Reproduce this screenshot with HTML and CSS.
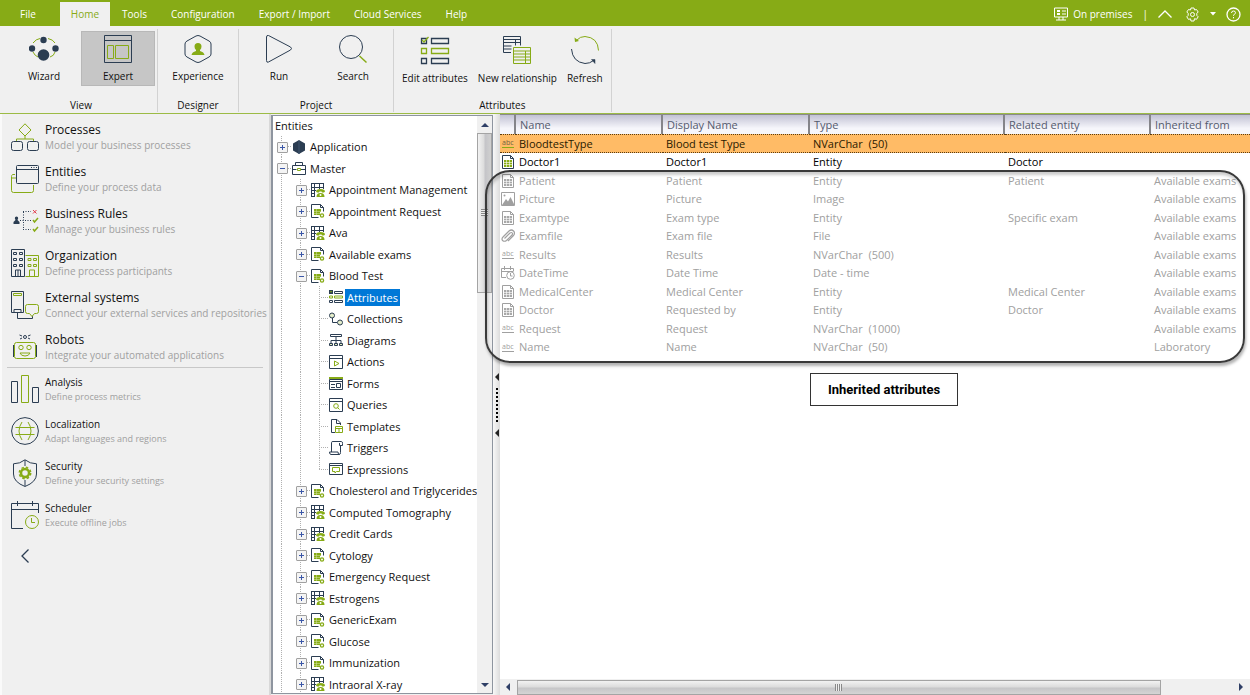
FILE: index.html
```html
<!DOCTYPE html>
<html lang="en">
<head>
	<meta charset="UTF-8">
	<meta name="viewport" content="width=device-width">
	<title>Studio - Blood Test attributes</title>
	<link rel="stylesheet" href="styles.css">
</head>
<body>

<!-- shared icons, used more than once below -->
<svg class="sprite" aria-hidden="true">
	<symbol id="i-table" viewBox="0 0 14 14">
		<path d="M0 .5h13M0 4.500h13M.5 0v13.500M3.500 0v13.500M8.500 0v6M12.500 0v6M0 7.500h5M0 10.500h4M0 13.500h4" fill="none" stroke="#2b3d52"/>
		<path d="M5 8.500Q5 6 9.500 6T14 8.500L13 9.500h-2L10.500 8.500h-2L8 9.500H6zM5.500 14q0-4 4-4t4 4z" fill="#87ab16"/>
		<circle cx="9.500" cy="12" r="1" fill="#fff"/>
	</symbol>
	<symbol id="i-doc" viewBox="0 0 14 14">
		<path d="M9.500.5h-9v13h7M9.500.5l3 3v4M9.500.5v3h3" fill="none" stroke="#2b3d52"/>
		<path d="M3 5h7v3H9v3H3z" fill="#87ab16"/>
		<path d="M3 7.500h7M3 9.500h6M5.500 5v6" stroke="#d5e3a8" stroke-width=".5"/>
		<circle cx="11" cy="11.500" r="1.600" fill="#fff" stroke="#87ab16" stroke-width="1.300"/>
	</symbol>
	<symbol id="i-entity" viewBox="0 0 14 14">
		<path d="M1.500.5h8l3 3v10h-11zM9.500.5v3h3" fill="none" stroke="currentColor"/>
		<path class="grid-fill" d="M3 5h8v7H3z"/>
		<path d="M3 7.500h8M3 9.500h8M5.500 5v7M8.500 5v7" stroke="#fff" stroke-width=".6"/>
	</symbol>
</svg>

<header class="topbar">
	<nav class="tabs">
		<a href="#" class="tab file">File</a>
		<a href="#" class="tab active">Home</a>
		<a href="#" class="tab">Tools</a>
		<a href="#" class="tab">Configuration</a>
		<a href="#" class="tab">Export / Import</a>
		<a href="#" class="tab">Cloud Services</a>
		<a href="#" class="tab">Help</a>
	</nav>
	<div class="tools">
		<svg width="14" height="14" viewBox="0 0 14 14"><path d="M.5 1h13v9H.5zM5 10v3M9 10v3M2 13h10M8 4h4M8 7h4" fill="none" stroke="#fff"/><path d="M3 3h3v2H3zM3 6h3v2H3z" fill="#fff"/></svg>
		<span>On premises</span>
		<span class="bar">|</span>
		<button class="tool" aria-label="Collapse ribbon"><svg width="14" height="8" viewBox="0 0 14 8"><path d="M.5 7.500 7 1l6.500 6.500" fill="none" stroke="#fff" stroke-width="1.300"/></svg></button>
		<button class="tool gear" aria-label="Settings">
			<svg width="15" height="15" viewBox="0 0 15 15"><path d="M6 1h3l.5 2 2-.5 1.700 2.500-1.400 1.400v2l1.400 1.400-1.700 2.500-2-.6L9 14H6l-.5-2.200-2 .6L1.800 9.800l1.400-1.400v-2L1.800 5l1.700-2.500 2 .5z" fill="none" stroke="#fff"/><circle cx="7.500" cy="7.500" r="2" fill="none" stroke="#fff"/></svg>
			<svg width="6" height="4" viewBox="0 0 6 4"><path d="M0 0h6L3 3.500z" fill="#fff"/></svg>
		</button>
		<button class="tool" aria-label="Help"><svg width="15" height="15" viewBox="0 0 15 15"><circle cx="7.500" cy="7.500" r="6.500" fill="none" stroke="#fff" stroke-width="1.300"/><path d="M5.500 6q0-2 2-2t2 1.800q0 1-1.200 1.500-.8.500-.8 1.500M7.500 10v1.300" fill="none" stroke="#fff"/></svg></button>
	</div>
</header>

<section class="ribbon">
	<div class="group">
		<div class="buttons">
			<button class="rb">
				<svg width="30" height="30" viewBox="0 0 30 30"><path d="M4 9q3-4 7-4.500M19 4.500q5 1 7 4.500M4 18q2 4 5 5M21 23q4-1 5-5" fill="none" stroke="#87ab16"/><g fill="#2b3d52"><circle cx="14.500" cy="6" r="3.200"/><circle cx="3" cy="14.500" r="3.200"/><circle cx="26.500" cy="14.500" r="3.200"/><circle cx="14.500" cy="21" r="5.800"/></g></svg>
				Wizard
			</button>
			<button class="rb on">
				<svg width="30" height="30" viewBox="0 0 30 30"><path d="M1.500 1.500h27v27h-27zM1.500 6.500h27" fill="none" stroke="#2b3d52"/><path d="M4.500 11.500h6v13h-6zM12.500 11.500h13v13h-13z" fill="none" stroke="#87ab16"/></svg>
				Expert
			</button>
		</div>
		<div class="caption">View</div>
	</div>
	<div class="group">
		<div class="buttons">
			<button class="rb">
				<svg width="30" height="30" viewBox="0 0 30 30"><path d="M13 2q2-1 4 0l9 5q2 1 2 3v10q0 2-2 3l-9 5q-2 1-4 0l-9-5q-2-1-2-3V10q0-2 2-3z" fill="none" stroke="#2b3d52"/><path d="M15 9q3.500 0 3.500 3.500 0 2-1.500 3.500v1q4 1 4.500 4h-13q.5-3 4.500-4v-1q-1.500-1.500-1.500-3.500Q11.500 9 15 9z" fill="#87ab16"/></svg>
				Experience
			</button>
		</div>
		<div class="caption">Designer</div>
	</div>
	<div class="group">
		<div class="buttons">
			<button class="rb">
				<svg width="30" height="30" viewBox="0 0 30 30"><path d="M2.500 3q0-2 2-1.500l22 11.500q2 1.500 0 3L4.500 28q-2 1-2-1.500z" fill="none" stroke="#2b3d52"/></svg>
				Run
			</button>
			<button class="rb">
				<svg width="30" height="30" viewBox="0 0 30 30"><circle cx="13" cy="13" r="11.500" fill="none" stroke="#2b3d52"/><path d="m21.500 22 7 6.500" stroke="#87ab16" stroke-width="1.500"/></svg>
				Search
			</button>
		</div>
		<div class="caption">Project</div>
	</div>
	<div class="group attrs">
		<div class="buttons">
			<button class="rb">
				<svg width="30" height="30" viewBox="0 0 30 30"><g fill="none" stroke="#2b3d52" stroke-width="1.300"><path d="M1.500 3.500h5v5h-5zM11.500 3.500h17v5h-17zM1.500 23.500h5v5h-5zM11.500 23.500h17v5h-17z"/><path d="M1.500 13.500h5v5h-5zM11.500 13.500h17v5h-17zM2 5l2 2 4.500-5" stroke="#87ab16"/></g></svg>
				Edit attributes
			</button>
			<button class="rb">
				<svg width="30" height="30" viewBox="0 0 30 30"><path d="M9 17.500H1.500v-16h17v9M1.500 4.500h17M1.500 7.500h17M1.500 11h8M1.500 14h8M13.500 4.500v6" fill="none" stroke="#2b3d52"/><path d="M11.500 12.500h17v16h-17zM11.500 16h17M11.500 19h17M11.500 22h17M11.500 25h17M23.500 16v12" fill="none" stroke="#87ab16"/></svg>
				New relationship
			</button>
			<button class="rb">
				<svg width="30" height="30" viewBox="0 0 30 30"><path d="M7 5Q10 1.500 15 1.500q13 1 13.500 14" fill="none" stroke="#87ab16"/><path d="M4.500 2.500l.5 4.500 4-1z" fill="#87ab16"/><path d="M1.500 14q1 13 13.500 14.500 5 0 8.500-3" fill="none" stroke="#2b3d52"/><path d="M21.500 24.500h3.500v4z" fill="#2b3d52" stroke="#2b3d52" stroke-width=".5"/></svg>
				Refresh
			</button>
		</div>
		<div class="caption">Attributes</div>
	</div>
</section>

<main class="work">

<nav class="side">
	<a href="#" class="mod">
		<svg width="28" height="28" viewBox="0 0 28 28"><path d="M14 .8 20 7l-6 6-6-6zM14 13v3M5.500 19v-3h17v3" fill="none" stroke="#87ab16"/><rect x=".5" y="18.500" width="11" height="9" rx="2" fill="none" stroke="#2b3d52"/><rect x="16.500" y="18.500" width="11" height="9" rx="2" fill="none" stroke="#2b3d52"/></svg>
		<span><b>Processes</b><small>Model your business processes</small></span>
	</a>
	<a href="#" class="mod">
		<svg width="28" height="28" viewBox="0 0 28 28"><path d="M4 9.500H1.500q-1 1-1 2v14q0 2 2 2h18q2 0 2-2V20M.5 13H5" fill="none" stroke="#87ab16"/><rect x="5.500" y=".5" width="22" height="18" rx="1" fill="#f0f0f0" stroke="#2b3d52"/><path d="M5.500 4.500h22M20 2.500h1M22.500 2.500h1M25 2.500h1" stroke="#2b3d52"/></svg>
		<span><b>Entities</b><small>Define your process data</small></span>
	</a>
	<a href="#" class="mod">
		<svg width="28" height="28" viewBox="0 0 28 28"><path d="M5.500 9.500q1.700 0 1.700 1.800l-.7 1.700 2 2v2h-6v-2l2-2-.7-1.700q0-1.800 1.700-1.800z" fill="#2b3d52"/><path d="M12 4.500h8M9 13.500h11M12 22.500h8M12.500 5v18" fill="none" stroke="#2b3d52" stroke-dasharray="1 1.500"/><path d="m22 3 3.500 3.500M25.500 3 22 6.500" stroke="#e33b4b"/><path d="m22 13 1.500 2 3.500-4M22 22l1.500 2 3.500-4" fill="none" stroke="#87ab16" stroke-width="1.500"/></svg>
		<span><b>Business Rules</b><small>Manage your business rules</small></span>
	</a>
	<a href="#" class="mod">
		<svg width="28" height="28" viewBox="0 0 28 28"><path d="M.5.5h13v27H.5zM4.500 27v-6h5v6M7 21v6" fill="none" stroke="#2b3d52"/><path d="M2.500 3.500h3v2h-3zM8.500 3.500h3v2h-3zM2.500 9.500h3v2h-3zM8.500 9.500h3v2h-3zM2.500 15.500h3v2h-3zM8.500 15.500h3v2h-3z" fill="none" stroke="#2b3d52"/><path d="M14.500 6.500h13v21h-13M18.500 27v-6h5v6M17 9.500h3v2h-3zM22.500 9.500h3v2h-3zM17 15.500h3v2h-3zM22.500 15.500h3v2h-3z" fill="none" stroke="#87ab16"/></svg>
		<span><b>Organization</b><small>Define process participants</small></span>
	</a>
	<a href="#" class="mod">
		<svg width="28" height="28" viewBox="0 0 28 28"><path d="M.5.5h12v21H.5zM3 21v-2.500h7V21M6.500 22v5.500h15V24" fill="none" stroke="#2b3d52"/><path d="M2.500 2.500h8v2h-8z" fill="none" stroke="#87ab16"/><path d="M16.500 13.500h9q2 0 2 2v5q0 2-2 2h-2l-2.500 3-2.500-3h-2q-2 0-2-2v-5q0-2 2-2z" fill="#f0f0f0" stroke="#87ab16"/></svg>
		<span><b>External systems</b><small>Connect your external services and repositories</small></span>
	</a>
	<a href="#" class="mod">
		<svg width="28" height="28" viewBox="0 0 28 28"><circle cx="14" cy="4" r="1.500" fill="none" stroke="#2b3d52"/><path d="M11 3 8.500 2M17 3l2.500-1M11 5l-2 1M17 5l2 1" stroke="#2b3d52"/><rect x="3.500" y="9.500" width="21" height="16" rx="2" fill="none" stroke="#87ab16"/><path d="M2.500 12v12M25.500 12v12" stroke="#2b3d52"/><circle cx="10" cy="14.500" r="2.200" fill="none" stroke="#87ab16"/><circle cx="18" cy="14.500" r="2.200" fill="none" stroke="#87ab16"/><path d="M9 20h10q-1 3-5 3t-5-3z" fill="none" stroke="#87ab16"/></svg>
		<span><b>Robots</b><small>Integrate your automated applications</small></span>
	</a>
	<a href="#" class="mod minor first">
		<svg width="28" height="28" viewBox="0 0 28 28"><path d="M.5 6.500h6v21h-6zM21.500 12.500h6v15h-6z" fill="none" stroke="#2b3d52"/><path d="M10.500.5h7v27h-7z" fill="none" stroke="#87ab16"/></svg>
		<span><b>Analysis</b><small>Define process metrics</small></span>
	</a>
	<a href="#" class="mod minor">
		<svg width="28" height="28" viewBox="0 0 28 28"><circle cx="14" cy="14" r="13.400" fill="none" stroke="#2b3d52"/><path d="M11 5Q5 14 11 23M17 5q6 9 0 18M4.500 10.500h19M4.500 17.500h19" fill="none" stroke="#87ab16"/></svg>
		<span><b>Localization</b><small>Adapt languages and regions</small></span>
	</a>
	<a href="#" class="mod minor">
		<svg width="28" height="28" viewBox="0 0 28 28"><path d="M14 .8q5 4 11.500 4V15q0 8-11.500 12.500Q2.500 23 2.500 15V4.800Q9 4.800 14 .8zM14 1v6M14 21v6" fill="none" stroke="#2b3d52"/><circle cx="14" cy="14" r="4" fill="none" stroke="#87ab16" stroke-width="2.500"/><circle cx="14" cy="14" r="5.700" fill="none" stroke="#87ab16" stroke-width="1.500" stroke-dasharray="2.500 2"/></svg>
		<span><b>Security</b><small>Define your security settings</small></span>
	</a>
	<a href="#" class="mod minor">
		<svg width="28" height="28" viewBox="0 0 28 28"><path d="M27.500 12V2.500H.5v25H12M.5 8.500h27M6.500 0v5M21.500 0v5" fill="none" stroke="#2b3d52"/><circle cx="21" cy="21" r="6.500" fill="none" stroke="#87ab16"/><path d="M20.500 17v4.500H24" fill="none" stroke="#87ab16"/></svg>
		<span><b>Scheduler</b><small>Execute offline jobs</small></span>
	</a>
	<button class="collapse" aria-label="Collapse"><svg width="10" height="16" viewBox="0 0 10 16"><path d="M8.500 1.500 2 8l6.500 6.500" fill="none" stroke="#2b3d52" stroke-width="1.300"/></svg></button>
</nav>

<section class="tree">
	<div class="tree-body">
		<h2>Entities</h2>
		<ul>
			<li><button class="cell twist" aria-label="Expand"></button><svg class="ico" viewBox="0 0 14 14"><path d="M7 0l6 3.500v7L7 14l-6-3.500v-7z" fill="#2b3d52"/><path d="M7 1v13" stroke="#40566e"/></svg><a href="#">Application</a></li>
			<li><button class="cell twist" aria-label="Collapse"></button><svg class="ico" viewBox="0 0 14 14"><path d="M.5 4.500h13v9H.5zM3.500 4V1.500h7V4M.5 8.500h4M9 8.500h4.500" fill="none" stroke="#2b3d52"/><path d="M5.500 7.500h3v2h-3z" fill="none" stroke="#87ab16"/></svg><a href="#">Master</a></li>
			<li><i class="cell"></i><button class="cell twist" aria-label="Expand"></button><svg class="ico"><use href="#i-table"/></svg><a href="#">Appointment Management</a></li>
			<li><i class="cell"></i><button class="cell twist" aria-label="Expand"></button><svg class="ico"><use href="#i-doc"/></svg><a href="#">Appointment Request</a></li>
			<li><i class="cell"></i><button class="cell twist" aria-label="Expand"></button><svg class="ico"><use href="#i-table"/></svg><a href="#">Ava</a></li>
			<li><i class="cell"></i><button class="cell twist" aria-label="Expand"></button><svg class="ico"><use href="#i-doc"/></svg><a href="#">Available exams</a></li>
			<li><i class="cell"></i><button class="cell twist" aria-label="Collapse"></button><svg class="ico"><use href="#i-doc"/></svg><a href="#">Blood Test</a></li>
			<li><i class="cell"></i><i class="cell"></i><i class="cell leaf"></i><svg class="ico" viewBox="0 0 14 14"><path d="M0 0h4v4H0z" fill="#2b3d52"/><path d="M1 1h2l-1 2z" fill="#87ab16"/><path d="M5.500 1.500h8v2h-8zM.5 10.500h3v2h-3zM5.500 10.500h8v2h-8z" fill="none" stroke="#2b3d52"/><path d="M.5 6h3v2h-3zM5.500 6h8v2h-8z" fill="none" stroke="#87ab16"/></svg><a href="#" class="sel">Attributes</a></li>
			<li><i class="cell"></i><i class="cell"></i><i class="cell leaf"></i><svg class="ico" viewBox="0 0 14 14"><circle cx="3" cy="3.500" r="2.500" fill="#e5eecb" stroke="#2b3d52"/><circle cx="11" cy="10.500" r="2.500" fill="#e5eecb" stroke="#2b3d52"/><path d="M3.500 6v4.500H8" fill="none" stroke="#2b3d52"/></svg><a href="#">Collections</a></li>
			<li><i class="cell"></i><i class="cell"></i><i class="cell leaf"></i><svg class="ico" viewBox="0 0 14 14"><path d="M1.500 1.500h11v2h-11zM7 4v3M2 10V7.500h10V10M7 7v3" fill="none" stroke="#2b3d52"/><path d="M.5 10.500h3v2h-3zM5.500 10.500h3v2h-3zM10.500 10.500h3v2h-3z" fill="#dfe9c0" stroke="#2b3d52"/></svg><a href="#">Diagrams</a></li>
			<li><i class="cell"></i><i class="cell"></i><i class="cell leaf"></i><svg class="ico" viewBox="0 0 14 14"><path d="M.5.5h13v13H.5zM.5 3.500h13" fill="none" stroke="#2b3d52"/><path d="M5.500 6v5L10 8.500z" fill="none" stroke="#87ab16"/></svg><a href="#">Actions</a></li>
			<li><i class="cell"></i><i class="cell"></i><i class="cell leaf"></i><svg class="ico" viewBox="0 0 14 14"><path d="M0 1h14v2H0z" fill="#87ab16"/><path d="M.5 3.500h13v10H.5zM.5 5.500h13M2 8.500h4M2 11.500h4M7.500 7.500h4v4h-4z" fill="none" stroke="#2b3d52"/></svg><a href="#">Forms</a></li>
			<li><i class="cell"></i><i class="cell"></i><i class="cell leaf"></i><svg class="ico" viewBox="0 0 14 14"><path d="M.5.5h13v13H.5zM.5 3.500h13" fill="none" stroke="#2b3d52"/><circle cx="7" cy="8" r="2.300" fill="none" stroke="#87ab16"/><path d="m8.500 9.500 2 2" stroke="#87ab16"/></svg><a href="#">Queries</a></li>
			<li><i class="cell"></i><i class="cell"></i><i class="cell leaf"></i><svg class="ico" viewBox="0 0 14 14"><path d="M6 13.500H2.500V.5H8L11.500 4v2M7.500 1v3.500H11" fill="none" stroke="#2b3d52"/><path d="M6.500 7.500h7v6h-7zM6.500 9.500h7M10 9.500v4" fill="none" stroke="#87ab16"/></svg><a href="#">Templates</a></li>
			<li><i class="cell"></i><i class="cell"></i><i class="cell leaf"></i><svg class="ico" viewBox="0 0 14 14"><path d="M11.500 4.500v7q0 2-1.500 2H2q-1.500 0-1.500-2.500H9q0 2.500 1.500 2.500M2.500 11V1.500q0-1 1.500-1h8.500q1 0 1 2v2h-3V2" fill="none" stroke="#2b3d52"/></svg><a href="#">Triggers</a></li>
			<li><i class="cell"></i><i class="cell"></i><i class="cell leaf last"></i><svg class="ico" viewBox="0 0 14 14"><path d="M.5 1.500h13v11H.5zM.5 3.500h13" fill="none" stroke="#2b3d52"/><path d="M3.500 5.500h7v4h-3L6 11V9.500H3.500z" fill="none" stroke="#87ab16"/></svg><a href="#">Expressions</a></li>
			<li><i class="cell"></i><button class="cell twist" aria-label="Expand"></button><svg class="ico"><use href="#i-doc"/></svg><a href="#">Cholesterol and Triglycerides</a></li>
			<li><i class="cell"></i><button class="cell twist" aria-label="Expand"></button><svg class="ico"><use href="#i-table"/></svg><a href="#">Computed Tomography</a></li>
			<li><i class="cell"></i><button class="cell twist" aria-label="Expand"></button><svg class="ico"><use href="#i-table"/></svg><a href="#">Credit Cards</a></li>
			<li><i class="cell"></i><button class="cell twist" aria-label="Expand"></button><svg class="ico"><use href="#i-doc"/></svg><a href="#">Cytology</a></li>
			<li><i class="cell"></i><button class="cell twist" aria-label="Expand"></button><svg class="ico"><use href="#i-doc"/></svg><a href="#">Emergency Request</a></li>
			<li><i class="cell"></i><button class="cell twist" aria-label="Expand"></button><svg class="ico"><use href="#i-table"/></svg><a href="#">Estrogens</a></li>
			<li><i class="cell"></i><button class="cell twist" aria-label="Expand"></button><svg class="ico"><use href="#i-doc"/></svg><a href="#">GenericExam</a></li>
			<li><i class="cell"></i><button class="cell twist" aria-label="Expand"></button><svg class="ico"><use href="#i-doc"/></svg><a href="#">Glucose</a></li>
			<li><i class="cell"></i><button class="cell twist" aria-label="Expand"></button><svg class="ico"><use href="#i-doc"/></svg><a href="#">Immunization</a></li>
			<li><i class="cell"></i><button class="cell twist" aria-label="Expand"></button><svg class="ico"><use href="#i-table"/></svg><a href="#">Intraoral X-ray</a></li>
		</ul>
	</div>
	<div class="vscroll">
		<i class="arrow up"></i>
		<div class="track"><div class="thumb"><i class="grip"></i></div></div>
		<i class="arrow down"></i>
	</div>
</section>

<div class="splitter"><i class="tri"></i><i class="dots"></i><i class="tri"></i></div>

<section class="grid">
	<table>
		<colgroup><col class="c-icon"><col class="c-name"><col class="c-disp"><col class="c-type"><col class="c-rel"><col></colgroup>
		<thead>
			<tr><th></th><th>Name</th><th>Display Name</th><th>Type</th><th>Related entity</th><th>Inherited from</th></tr>
		</thead>
		<tbody>
			<tr class="picked"><td><span class="abc">abc</span></td><td>BloodtestType</td><td>Blood test Type</td><td>NVarChar &nbsp;(50)</td><td></td><td></td></tr>
			<tr class="own"><td><svg class="ico"><use href="#i-entity"/></svg></td><td>Doctor1</td><td>Doctor1</td><td>Entity</td><td>Doctor</td><td></td></tr>
			<tr><td><svg class="ico"><use href="#i-entity"/></svg></td><td>Patient</td><td>Patient</td><td>Entity</td><td>Patient</td><td>Available exams</td></tr>
			<tr><td><svg class="ico" viewBox="0 0 14 14"><path d="M.5.5h13v13H.5z" fill="none" stroke="currentColor"/><path d="M1 13l4-6 2 2.500L9.500 5l4 8z" fill="currentColor"/><circle cx="3.500" cy="3.500" r="1" fill="currentColor"/></svg></td><td>Picture</td><td>Picture</td><td>Image</td><td></td><td>Available exams</td></tr>
			<tr><td><svg class="ico"><use href="#i-entity"/></svg></td><td>Examtype</td><td>Exam type</td><td>Entity</td><td>Specific exam</td><td>Available exams</td></tr>
			<tr><td><svg class="ico" viewBox="0 0 14 14"><path d="M3.500 9.500 9 4q1.500-1 2.300 0 .7 1-.3 2l-5.500 5.500Q3.500 13 1.500 11.500.3 9.500 2 8l6-6q2.500-2 4.500 0t0 4.500L7 12" fill="none" stroke="currentColor" stroke-width="1.200"/></svg></td><td>Examfile</td><td>Exam file</td><td>File</td><td></td><td>Available exams</td></tr>
			<tr><td><span class="abc">abc</span></td><td>Results</td><td>Results</td><td>NVarChar &nbsp;(500)</td><td></td><td>Available exams</td></tr>
			<tr><td><svg class="ico" viewBox="0 0 14 14"><path d="M12.500 5V2.500H.5v9H5M.5 5.500h12M3.500 0v4M9.500 0v4" fill="none" stroke="currentColor"/><circle cx="9.500" cy="9.500" r="3.800" fill="none" stroke="currentColor"/><path d="M9.500 7v3h2" fill="none" stroke="currentColor"/></svg></td><td>DateTime</td><td>Date Time</td><td>Date - time</td><td></td><td>Available exams</td></tr>
			<tr><td><svg class="ico"><use href="#i-entity"/></svg></td><td>MedicalCenter</td><td>Medical Center</td><td>Entity</td><td>Medical Center</td><td>Available exams</td></tr>
			<tr><td><svg class="ico"><use href="#i-entity"/></svg></td><td>Doctor</td><td>Requested by</td><td>Entity</td><td>Doctor</td><td>Available exams</td></tr>
			<tr><td><span class="abc">abc</span></td><td>Request</td><td>Request</td><td>NVarChar &nbsp;(1000)</td><td></td><td>Available exams</td></tr>
			<tr><td><span class="abc">abc</span></td><td>Name</td><td>Name</td><td>NVarChar &nbsp;(50)</td><td></td><td>Laboratory</td></tr>
		</tbody>
	</table>
	<p class="note">Inherited attributes</p>
	<div class="hscroll">
		<i class="arrow left"></i>
		<div class="track"><div class="thumb"><i class="grip"></i></div></div>
		<i class="arrow right"></i>
	</div>
</section>

<!-- frame round the inherited rows -->
<div class="frame"></div>

</main>

</body>
</html>
```
FILE: styles.css
```css
* { box-sizing: border-box; }

body {
	margin: 0;
	height: 100vh;
	display: flex;
	flex-direction: column;
	overflow: hidden;
	background: #f0f0f0;
	color: #111;
	font: 11px/14px "Open Sans", "Noto Sans", sans-serif;
}

a { color: inherit; text-decoration: none; }

button {
	border: 0;
	padding: 0;
	background: none;
	color: inherit;
	font: inherit;
}

svg { flex: none; display: block; }
.sprite { position: absolute; width: 0; height: 0; }

.topbar, .ribbon { font-size: 10px; }

/* top bar */
.topbar {
	display: flex;
	justify-content: space-between;
	height: 26px;
	background: #87ab16;
	color: #fff;
}

.tabs { display: flex; padding-top: 2px; }
.tab { padding: 5px 12px; }
.tab.file { padding: 5px 24px 5px 20px; }
.tab.active { padding: 5px 11px; background: #f0f0f0; color: #87ab16; }

.tools {
	display: flex;
	align-items: center;
	gap: 5px;
	padding: 2px 9px 0 0;
}
.tools .bar { padding: 0 5px; }
.tool { display: flex; align-items: center; }
.gear { gap: 10px; margin: 0 5px 0 8px; }

/* ribbon */
.ribbon {
	display: flex;
	height: 88px;
	padding: 3px 0 1px;
	border-bottom: 1px solid #9cbb45;
}

.group {
	display: flex;
	flex-direction: column;
	justify-content: space-between;
	border-right: 1px solid #d2d2d2;
	padding: 2px 3px 0;
}
.group:first-child { padding: 2px 2px 0 7px; }

.buttons { display: flex; }

.rb {
	display: flex;
	flex-direction: column;
	align-items: center;
	gap: 5px;
	width: 74px;
	height: 55px;
	padding-top: 3px;
}
.rb.on { background: #c6c6c6; outline: 1px solid #b8b8b8; outline-offset: -1px; }
.attrs .rb { width: auto; padding: 4px 5px 0; gap: 6px; }

.caption { text-align: center; }

/* work area */
.work {
	position: relative;
	flex: 1;
	min-height: 0;
	display: grid;
	grid-template-columns: 271px 222px 7px 1fr;
}

.side {
	border-left: 2px solid #fafafa;
	border-right: 2px solid #d8d8d8;
	padding: 2px 6px 0 5px;
}

.mod {
	display: flex;
	gap: 6px;
	height: 42px;
	padding: 7px 0 0 4px;
	white-space: nowrap;
}
.mod span { display: flex; flex-direction: column; margin-top: -7px; }
.mod b { font-size: 12px; line-height: 16px; font-weight: normal; padding-top: 6px; }
.mod small { font-size: 10px; line-height: 14px; color: #a0a0a0; }
.minor b { font-size: 10px; }
.minor small { font-size: 9px; }
.mod.first { border-top: 1px solid #c8c8c8; margin-top: -1px; height: 43px; }

.collapse { padding: 12px 13px; }

/* entity tree */
.tree {
	display: flex;
	min-height: 0;
	background: #fff;
	border: solid #8e959f;
	border-width: 1px 1px 1px 2px;
	margin: 1px 0;
}
.tree-body { flex: 1; min-width: 0; overflow: hidden; }
.tree h2 { margin: 0; padding: 3px 2px; font-size: 11px; font-weight: normal; line-height: 14px; }
.tree ul { margin: 0; padding: 0; list-style: none; }
.tree li { display: flex; align-items: center; height: 21px; white-space: nowrap; }
.tree li:nth-child(even) { height: 22px; }
.tree a { padding: 1px 2px; line-height: 15px; }
.tree .sel { background: #0078d7; color: #fff; }

.ico { width: 14px; height: 14px; margin: 0 1px; }
.tree .ico { margin: 0 2px 0 0; }

.cell {
	position: relative;
	flex: none;
	width: 19px;
	height: 100%;
	background: repeating-linear-gradient(#b0b0b0 0 1px, #fff 1px 2px) 8px 0 / 1px 100% no-repeat;
}
.cell.leaf, .cell.twist {
	background:
		repeating-linear-gradient(#b0b0b0 0 1px, #fff 1px 2px) 8px 0 / 1px 100% no-repeat,
		repeating-linear-gradient(90deg, #b0b0b0 0 1px, #fff 1px 2px) 100% 50% / 10px 1px no-repeat;
}
.cell.leaf { width: 18px; }
.cell.last { background-size: 1px 50%, 10px 1px; }

/* plus or minus box, drawn over the guide line */
.twist::before {
	content: "";
	position: absolute;
	left: 4px;
	top: 6px;
	width: 9px;
	height: 9px;
	border: 1px solid #a0a0a0;
	border-radius: 1px;
	background:
		linear-gradient(#3b57a8, #3b57a8) center / 5px 1px no-repeat,
		linear-gradient(#3b57a8, #3b57a8) center / 1px 5px no-repeat,
		#f4f4f4;
}
.twist[aria-label="Collapse"]::before {
	background: linear-gradient(#3b57a8, #3b57a8) center / 5px 1px no-repeat, #f4f4f4;
}

/* scroll bars */
.vscroll {
	display: flex;
	flex-direction: column;
	align-items: center;
	width: 15px;
	padding: 7px 0 6px;
	background: #f0f0f0;
}
.hscroll {
	display: flex;
	align-items: center;
	height: 16px;
	padding: 0 7px 0 6px;
	background: #f0f0f0;
}
.vscroll .track { flex: 1; width: 15px; padding-top: 6px; }
.hscroll .track { flex: 1; height: 15px; padding: 0 7px; }
.thumb { display: flex; align-items: center; justify-content: center; border: 1px solid #a4a4a4; }
.vscroll .thumb { height: 29%; background: linear-gradient(90deg, #f2f2f2, #dcdcdc 45%, #c4c4c8 55%, #d0d0d0); }
.hscroll .thumb { width: 90%; height: 100%; background: linear-gradient(#f2f2f2, #dcdcdc 45%, #c6c6c8 55%, #d4d4d4); }
.vscroll .grip { width: 7px; height: 7px; background: repeating-linear-gradient(#888 0 1px, #eee 1px 2px); }
.hscroll .grip { width: 7px; height: 7px; background: repeating-linear-gradient(90deg, #888 0 1px, #eee 1px 2px); }

.arrow { border: 4px solid transparent; }
.up { border-top: 0; border-bottom-color: #2f3f66; }
.down { border-bottom: 0; border-top-color: #2f3f66; }
.left { border-left: 0; border-right-color: #2f3f66; }
.right { border-right: 0; border-left-color: #2f3f66; }

/* splitter between tree and grid */
.splitter {
	display: flex;
	flex-direction: column;
	align-items: center;
	justify-content: center;
	gap: 7px;
	background: linear-gradient(90deg, #f8f8f8, #dcdcdc);
}
.tri { border: 4px solid transparent; border-left: 0; border-right-color: #222; }
.dots { width: 2px; height: 34px; background: repeating-linear-gradient(#000 0 2px, transparent 2px 4px); }

/* attribute grid */
.grid {
	display: flex;
	flex-direction: column;
	min-width: 0;
	background: #fff;
	border-top: 1px solid #8a8a8a;
}

table { width: 100%; table-layout: fixed; border-collapse: separate; border-spacing: 0; }
.c-icon { width: 16px; }
.c-name, .c-disp { width: 147px; }
.c-type { width: 195px; }
.c-rel { width: 146px; }

th {
	height: 19px;
	padding: 0 4px;
	border-right: 2px solid #85858a;
	background: linear-gradient(#c2c2d4, #f6f6fb 70%);
	color: #555b6e;
	font-weight: normal;
	text-align: left;
	white-space: nowrap;
}
th:last-child { border-right: 0; }

td {
	height: 19px;
	padding: 0 3px;
	color: #a0a0a0;
	line-height: 14px;
	white-space: nowrap;
}
tr:nth-child(even) td { height: 18px; }
td:first-child { padding: 0; }
.own td { color: #000; }
.own .ico { --grid: #87ab16; color: #2b3d52; }
.picked td {
	background: #ffbb66;
	color: #2a1a00;
	border: dotted #5a3c10;
	border-width: 1px 0;
}
.grid-fill { fill: var(--grid, #a8a8a8); }

.abc {
	display: block;
	width: 12px;
	margin-left: 2px;
	border-bottom: 1px solid currentColor;
	font-size: 7px;
	line-height: 8px;
}
.picked .abc { color: #6f6242; border-color: #87ab16; }

.note {
	align-self: center;
	margin: 17px 0 auto 18px;
	padding: 8px 17px;
	border: 1px solid #333;
	color: #000;
	font: bold 13px/15px Roboto, sans-serif;
}

.frame {
	position: absolute;
	top: 56px;
	right: 5px;
	left: 485px;
	height: 193px;
	border: 2px solid #3a3a3a;
	border-radius: 25px;
	box-shadow: 1px 3px 3px rgba(0, 0, 0, .3), inset 1px 3px 3px rgba(0, 0, 0, .2);
	pointer-events: none;
}
```
